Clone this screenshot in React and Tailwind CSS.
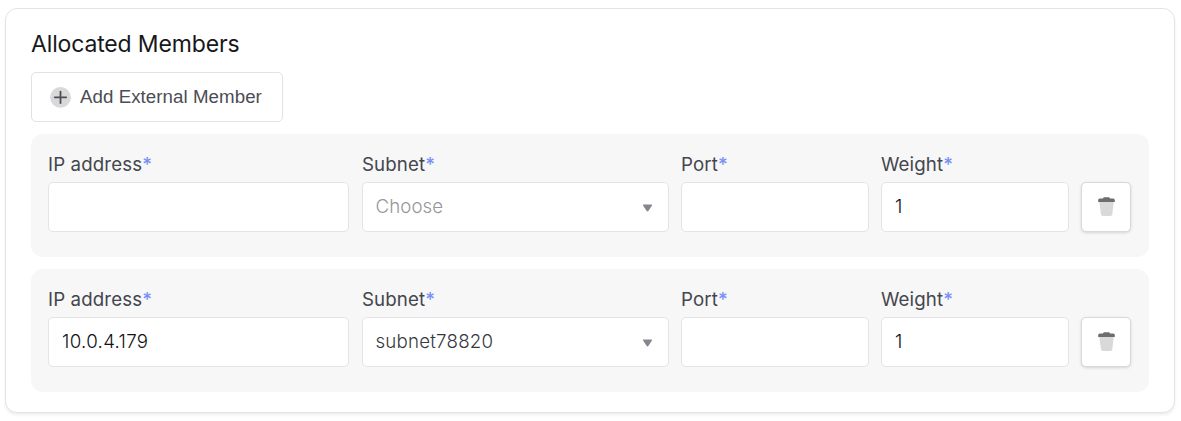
import React from "react";

const members = [
  { id: 1, ip: "", subnet: "", port: "", weight: "1" },
  { id: 2, ip: "10.0.4.179", subnet: "subnet78820", port: "", weight: "1" },
];

function PlusIcon() {
  return (
    <svg className="mr-[9px] size-[21px] shrink-0" viewBox="0 0 21 21" aria-hidden="true">
      <circle cx="10.5" cy="10.4" r="10.4" fill="#d9d9da" />
      <path d="M4.8 10.3H16.2M10.5 4.6V16" stroke="#4d4f54" strokeWidth="1.8" strokeLinecap="round" />
    </svg>
  );
}

function TrashIcon() {
  return (
    <svg className="mb-px ml-px h-[19px] w-[17px]" viewBox="0 0 17 19" aria-hidden="true">
      <path d="M1.3 5H15.7L14.4 17Q14.1 18.9 12.4 18.9H4.9Q3.2 18.9 2.9 17Z" fill="#d9d9d9" />
      <path d="M0.2 5.1V2.9Q0.2 1.4 1.8 1.4H4.9L5.8 0.3H11.2L12.1 1.4H15.2Q16.8 1.4 16.8 2.9V5.1Z" fill="#6d6d6d" />
    </svg>
  );
}

function Caret() {
  return (
    <svg className="mt-[2px] h-2 w-[10px]" viewBox="0 0 10 8" aria-hidden="true">
      <path d="M0.5 0.5H8.5Q9.4 0.6 9 1.6L5.5 6.8Q4.5 8 3.5 6.8L0.1 1.6Q-0.3 0.6 0.5 0.5Z" fill="#85878f" />
    </svg>
  );
}

function Field({ label, className, children }) {
  return (
    <div className={className}>
      <div className="h-8 text-[18.7px] leading-[30px] tracking-[0.12px] text-[#43464d]">
        {label}
        <span className="font-medium text-[#7690f5]">*</span>
      </div>
      {children}
    </div>
  );
}

function TextBox({ value }) {
  return (
    <div className="flex h-[50px] items-center rounded-[5px] border border-[#e4e4e6] bg-white px-[13px] text-[18.7px] font-light tracking-[0.32px] text-[#101216]">
      {value}
    </div>
  );
}

function SelectBox({ value }) {
  return (
    <div className="flex h-[50px] items-center justify-between rounded-[5px] border border-[#e4e4e6] bg-white pr-[15px] pl-[12.5px] text-[18.7px] font-light tracking-[0.22px]">
      {value ? (
        <span className="text-[#36393f]">{value}</span>
      ) : (
        <span className="tracking-[0.08px] text-[#96979b]">Choose</span>
      )}
      <Caret />
    </div>
  );
}

function MemberRow({ member }) {
  return (
    <div className="flex h-[123px] rounded-xl bg-[#f7f7f7] px-[17px] pt-4">
      <Field label="IP address" className="mr-[13px] w-[301px]">
        <TextBox value={member.ip} />
      </Field>
      <Field label="Subnet" className="mr-3 w-[307px]">
        <SelectBox value={member.subnet} />
      </Field>
      <Field label="Port" className="mr-3 w-[188px]">
        <TextBox value={member.port} />
      </Field>
      <Field label="Weight" className="mr-3 w-[188px]">
        <TextBox value={member.weight} />
      </Field>
      <button
        aria-label="Remove member"
        className="mt-8 flex size-[50px] items-center justify-center rounded-[5px] border border-[#d9d9da] bg-white shadow-[0_1px_3px_rgba(0,0,0,0.14)]"
      >
        <TrashIcon />
      </button>
    </div>
  );
}

export default function App() {
  return (
    <div className="h-[421px] bg-white pt-2 pr-[6px] pl-[5px] font-['Inter',sans-serif]">
      <section className="h-[405px] rounded-xl border border-[#e4e4e5] bg-white px-[25px] pt-5 shadow-[0_2px_3px_rgba(0,0,0,0.07)]">
        <h2 className="h-[43px] text-[23px] leading-[30px] tracking-[-0.15px] text-[#17181b]">Allocated Members</h2>
        <button className="flex h-[50px] w-[252px] items-center rounded-[5px] border border-[#e2e2e4] bg-white pl-[18px] font-['Liberation_Sans',sans-serif] text-[18.7px] tracking-[0.06px] whitespace-nowrap text-[#4b4d53]">
          <PlusIcon />
          Add External Member
        </button>
        <div className="mt-3 flex flex-col gap-3">
          {members.map((m) => (
            <MemberRow key={m.id} member={m} />
          ))}
        </div>
      </section>
    </div>
  );
}
